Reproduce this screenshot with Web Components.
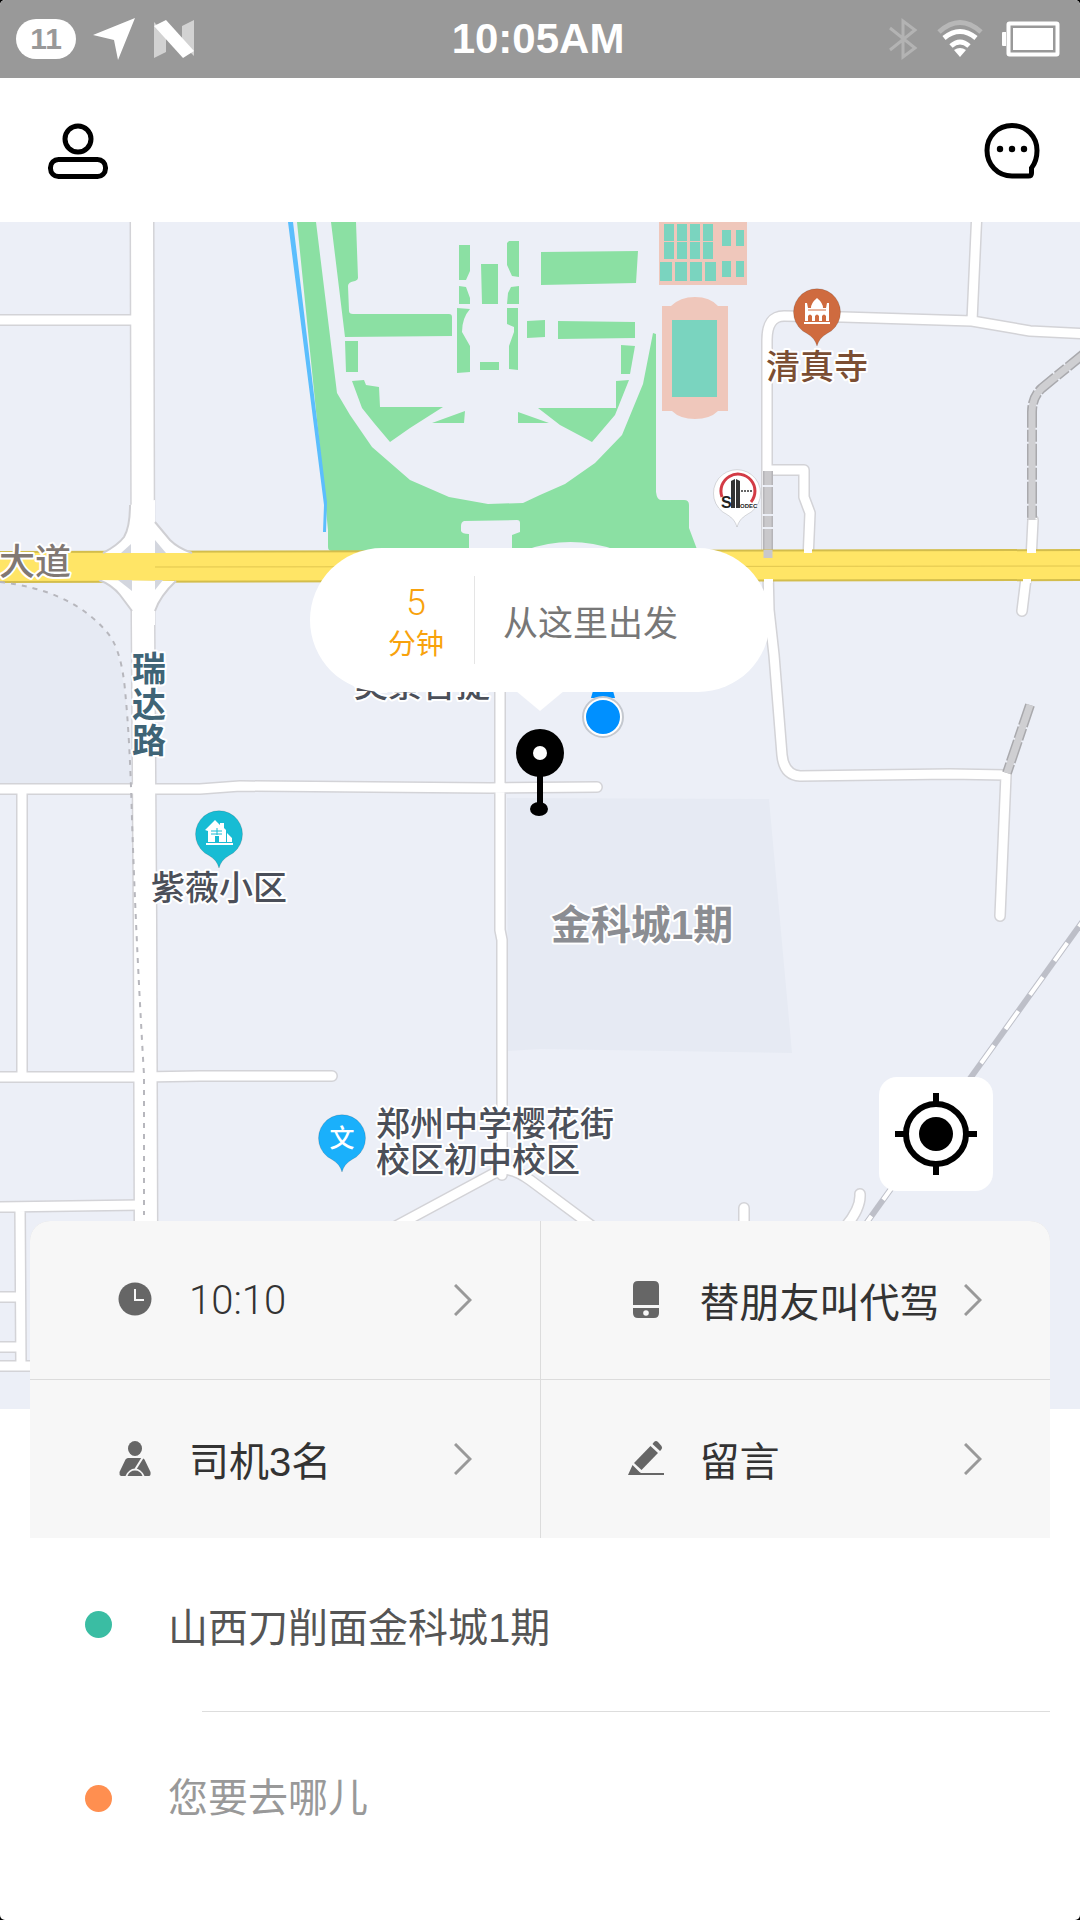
<!DOCTYPE html>
<html lang="zh-CN">
<head>
<meta charset="utf-8">
<meta name="viewport" content="width=device-width, initial-scale=1">
<title>代驾</title>
<style>
  html {
    background: #000;
  }
  body {
    margin: 0;
    color: #333;
    font-family: "Liberation Sans", "Noto Sans CJK SC", sans-serif;
    font-size: 40px;
  }
</style>
</head>
<body>
<driver-app></driver-app>

<script>
const icons = {
  user: `<svg width="60" height="56" viewBox="0 0 60 56" fill="none" stroke="#000" stroke-width="5">
    <circle cx="30" cy="16" r="13"/><rect x="2.5" y="36.500" width="55" height="17" rx="8"/></svg>`,
  chat: `<svg width="56" height="58" viewBox="0 0 56 58">
    <path d="M28 3.500C13.500 3.500 3 14.500 3 28.500S13.500 54 28 54H44.500Q47.500 54 47.500 51V46Q53 39 53 28.500C53 14.500 42.500 3.500 28 3.500Z" fill="none" stroke="#000" stroke-width="5"/>
    <circle cx="16" cy="27" r="3.200"/><circle cx="28" cy="27" r="3.200"/><circle cx="40" cy="27" r="3.200"/></svg>`,
  locate: `<svg width="82" height="82" viewBox="0 0 82 82" fill="none" stroke="#000" stroke-width="6">
    <circle cx="41" cy="41" r="30"/><path d="M41 0V10M41 72V82M0 41H10M72 41H82"/>
    <circle cx="41" cy="41" r="17" fill="#000" stroke="none"/></svg>`,
  clock: `<svg width="40" height="40" viewBox="0 0 40 40"><circle cx="20" cy="19" r="16.500" fill="#666"/>
    <path d="M20 9V20H29" fill="none" stroke="#f7f7f7" stroke-width="2"/></svg>`,
  phone: `<svg width="40" height="40" viewBox="0 0 40 40"><g fill="#666">
    <path d="M7 25V6Q7 1 12 1H28Q33 1 33 6V25Z"/><path d="M7 28H33V33Q33 38 28 38H12Q7 38 7 33Z"/></g>
    <circle cx="20" cy="33" r="2.800" fill="#f7f7f7"/></svg>`,
  driver: `<svg width="40" height="40" viewBox="0 0 40 40"><g fill="#666">
    <ellipse cx="20" cy="9.500" rx="7" ry="7.500"/>
    <path d="M13 19H27Q28.500 19 29.500 20.500L35.500 33Q36 37 34 37H29.500Q26 29.500 20 29.500T10.500 37H6Q4 36 4.500 33L10.500 20.500Q11.500 19 13 19Z"/>
    <path d="M12.500 37Q14.500 31.500 20 31.500T27.500 37Z"/></g>
    <path d="M28 18L20.500 30" stroke="#f7f7f7" stroke-width="2"/></svg>`,
  pencil: `<svg width="40" height="40" viewBox="0 0 40 40"><g fill="#666">
    <path d="M28 3Q30 1 32 3L35.500 7Q37 9 35 11L34 12L26.500 5Z"/>
    <path d="M24.500 7L32 14L15.500 31L8 24Z"/><path d="M6.500 26L13.500 33L15 34H38V36H2Z"/></g></svg>`,
  chevron: `<svg width="18" height="32" viewBox="0 0 18 32"><path d="M1 1L16 16L1 31" fill="none" stroke="#999" stroke-width="3"/></svg>`,
  arrow: `<svg width="46" height="44" viewBox="0 0 46 44"><path d="M43 1L26 43L22 23L1 18Z" fill="#fff"/></svg>`,
  nougat: `<svg width="40" height="38" viewBox="0 0 40 38"><path d="M0 2L12 14V32L0 38ZM28 6L40 0V36L28 24Z" fill="#d2d2d2"/>
    <path d="M0 6L12 0L40 31L29 38Z" fill="#fff"/></svg>`,
  bluetooth: `<svg width="30" height="42" viewBox="0 0 30 42"><path d="M2 10L27 30L15 39V3L27 12L2 32" fill="none" stroke="#b3b3b3" stroke-width="3"/></svg>`,
  wifi: `<svg width="48" height="40" viewBox="0 0 48 40" fill="none" stroke="#fff" stroke-width="5">
    <path d="M3 13Q24-6 45 13" stroke="#b7b7b7"/><path d="M8 19Q24 6 40 19M15 27Q24 19 33 27"/>
    <path d="M18 31Q24 27 30 31L24 38Z" fill="#fff" stroke="none"/></svg>`,
  battery: `<svg width="58" height="36" viewBox="0 0 58 36"><path d="M4 11H1Q0 11 0 12V24Q0 25 1 25H4Z" fill="#fff"/>
    <rect x="6.500" y="2.500" width="49" height="31" rx="1" fill="none" stroke="#fff" stroke-width="4"/>
    <rect x="11" y="7" width="40" height="22" fill="#fff"/></svg>`,
};

class AppIcon extends HTMLElement {
  constructor() {
    super();
    this.shadowDOM = this.attachShadow({ mode: "open" });
  }

  connectedCallback() {
    this.shadowDOM.innerHTML = `
    <style>
      :host { display: block; flex: none; }
      svg { display: block; }
    </style>
    ${icons[this.getAttribute("name")]}`;
  }
}

class StatusBar extends HTMLElement {
  constructor() {
    super();
    this.shadowDOM = this.attachShadow({ mode: "open" });
    this.shadowDOM.innerHTML = `
    <style>
      :host {
        display: grid;
        grid-template-columns: 1fr auto 1fr;
        align-items: center;
        height: 78px;
        padding: 0 20px 0 16px;
        background: #999;
        color: #fff;
      }
      div { display: flex; align-items: center; gap: 18px; }
      .left { gap: 16px; }
      .right { justify-content: flex-end; }
      .count {
        width: 60px;
        border-radius: 20px;
        background: #fff;
        color: #999;
        font-size: 30px;
        font-weight: bold;
        line-height: 40px;
        text-align: center;
      }
      time { font-size: 42px; font-weight: bold; }
    </style>
    <div class="left">
      <span class="count">11</span>
      <app-icon name="arrow"></app-icon>
      <app-icon name="nougat"></app-icon>
    </div>
    <time><slot></slot></time>
    <div class="right">
      <app-icon name="bluetooth"></app-icon>
      <app-icon name="wifi"></app-icon>
      <app-icon name="battery"></app-icon>
    </div>`;
  }
}

class TopBar extends HTMLElement {
  constructor() {
    super();
    this.shadowDOM = this.attachShadow({ mode: "open" });
    this.shadowDOM.innerHTML = `
    <style>
      :host {
        display: flex;
        align-items: center;
        justify-content: space-between;
        height: 142px;
        padding: 2px 40px 0 48px;
      }
      button { padding: 0; border: 0; background: none; }
    </style>
    <button aria-label="个人中心"><app-icon name="user"></app-icon></button>
    <button aria-label="消息"><app-icon name="chat"></app-icon></button>`;
  }
}

class CityMap extends HTMLElement {
  constructor() {
    super();
    this.shadowDOM = this.attachShadow({ mode: "open" });
    this.render();
  }

  // every street is drawn twice: a grey casing first, then the white surface
  roads() {
    const streets = [
      "M-9 320H142", "M-9 789H131L200 789L240 786L490 788L597 787",
      "M22 789V1077", "M-9 1077H142L200 1076L332 1076", "M-9 1207L142 1205",
      "M20 1207L21 1366", "M-9 1297H20", "M-9 1347H20", "M-9 1366H40",
      "M500 680V930L502 940V1175", "M502 1169L385 1232", "M502 1169Q515 1169 530 1180L600 1232",
      "M744 1208V1240", "M860 1194Q861 1208 846 1226",
      "M977 210L972 321", "M767 560V340Q767 316 784 316L843 317L972 321L1030 331L1090 334",
      "M767 470H804V497L810 513L808 560",
      "M768 570L769 610L774 655L782 755Q784 775 800 776L950 774L1006 775L1000 916",
      "M1033 520L1031 560", "M1027 570L1022 611",
    ];
    const d = streets.join("");
    const avenue = "M142 210L143 620L145 920L146 1240";
    return `
      <g fill="none" stroke-linecap="round" stroke-linejoin="round">
        <path d="${avenue}" stroke="#d3d3d7" stroke-width="25"/>
        <path d="${d}" stroke="#d3d3d7" stroke-width="12"/>
        <path d="${d}" stroke="#fff" stroke-width="9"/>
        <path d="${avenue}" stroke="#fff" stroke-width="22"/>
      </g>`;
  }

  junction() {
    const ramps = [
      "M130 505Q130 527 124 537Q118 545 103 553", "M155 522L170 540Q178 548 192 553",
      "M99 580Q112 585 120 595L132 611", "M176 581Q160 596 155 611",
    ];
    return `
      <path d="M130 505Q130 527 124 537Q118 545 103 553H192Q178 548 170 540L155 522V500Z" fill="#fff"/>
      <path d="M99 580Q112 585 120 595L132 611V625H155V611Q160 596 176 581Z" fill="#fff"/>
      <path d="${ramps.join("")}" fill="none" stroke="#cfcfd3" stroke-width="2"/>
      <path d="M121 553L131 544V553ZM155 540V553H166ZM118 580H132V591ZM155 580H163L155 590Z" fill="#d3d6de"/>`;
  }

  pin(x, y, color, glyph) {
    return `
      <g transform="translate(${x} ${y})">
        <path d="M0 34Q-2 26-10 21.500A23.500 23.500 0 1 1 10 21.500Q2 26 0 34Z" fill="${color}" stroke="#0002"/>
        ${glyph}
      </g>`;
  }

  render() {
    this.shadowDOM.innerHTML = `
    <style>
      :host {
        display: grid;
        position: relative;
        height: 1187px;
        overflow: hidden;
        background: #eceff7;
      }
      svg { display: block; width: 100%; height: 1187px; }
      text {
        font-size: 34px;
        font-weight: 500;
        fill: #4b4f59;
        stroke: #fff;
        stroke-width: 4px;
        stroke-linejoin: round;
        paint-order: stroke;
      }
      .big { font-size: 40px; font-weight: bold; fill: #8b8d92; }
      .road { font-size: 36px; fill: #817873; }
      .avenue { font-size: 34px; font-weight: bold; fill: #3f6476; }
      .temple { fill: #7b4e33; }
      .glyph { font-size: 25px; fill: #fff; stroke: none; }
      .logo { font-size: 16px; font-weight: bold; fill: #222; stroke: none; }
      .small { font-size: 6px; }
      ::slotted(pickup-bubble) {
        position: absolute;
        top: 326px;
        left: 50%;
        transform: translateX(-50%);
      }
      ::slotted(locate-button) {
        position: absolute;
        right: 87px;
        bottom: 218px;
      }
    </style>
    <svg viewBox="0 222 1080 1187" preserveAspectRatio="xMidYMid slice" role="img" aria-label="地图">
      <g fill="#e6eaf3">
        <path d="M0 582Q70 590 105 630Q128 655 131 784H0Z"/>
        <path d="M507 798L769 799L792 1053L540 1049L508 1051Z"/>
      </g>
      <g fill="#8be0a3">
        <path d="M297 222H316L337 393L350 415L372 447L410 480L449 497L488 504L523 503L540 495L565 484L595 463L622 435L643 384L653 333L656 334V492Q657 500 661 500H684Q689 500 689 505V528L698 552H512V535L520 532V523Q520 520 517 520L464 521Q461 522 461 526V531Q462 534 469 534V551H332Q328 551 328 547V530Z"/>
        <path d="M331 222H356L358 278Q358 280 355 281Q348 282 348 286L349 311Q349 314 353 314H449Q452 314 452 317V336L345 337Z"/>
        <path d="M345 341H358V372H346Z"/>
        <path d="M352 381L364 380L366 385L379 387L380 407H443L410 428L390 442L374 423L362 408Z"/>
        <path d="M432 423L465 411L464 423ZM518 412L549 423H518Z"/>
        <path d="M538 408H616V381L629 380L615 415L592 442L560 425Z"/>
        <path d="M621 345L635 346L630 374H621Z"/>
        <path d="M541 252L638 251L636 283L541 285ZM558 321L635 322V338L558 339ZM527 321L545 320V337L527 338Z"/>
        <path d="M459 245H470V271L466 280H459ZM507 243L509 241H519V277L512 276L507 265ZM481 264H498V304H482Z"/>
        <path d="M459 286L466 287L470 298V304H459ZM511 287L519 286V304H507L508 293Z"/>
        <path d="M457 308L470 309Q462 318 462 332L470 346V372L457 373ZM507 308H518V370L509 369V346L514 332V327L507 324ZM480 362H499V370H480Z"/>
      </g>
      <path d="M526 550Q570 534 616 550Z" fill="#eceff7"/>
      <path d="M288 222H293L327 502L326 532H323L324 505Z" fill="#5bbefd"/>
      <path d="M659 222H747V285H659ZM662 306H671Q680 297 695 297T718 306H728V411H718Q710 419 695 419T672 411H662Z" fill="#efc7bb"/>
      <path d="M664 224h10v17h-10zm13 0h10v17h-10zm13 0h10v17h-10zm13 0h10v17h-10zM664 242h10v17h-10zm13 0h10v17h-10zm13 0h10v17h-10zm13 0h10v17h-10zM660 262h12v19h-12zm15 0h12v19h-12zm15 0h12v19h-12zm15 0h11v19h-11zM722 230h9v16h-9zm14 0h8v16h-8zM722 261h9v16h-9zm14 0h8v16h-8zM672 320h45v77h-45z" fill="#7ad4bf"/>

      ${this.roads()}

      <g fill="none">
        <path d="M1085 353L1042 388Q1032 397 1032 412V520M1030 705L1007 773" stroke="#a9a9ad" stroke-width="10" stroke-dasharray="22 2 12 2"/>
        <path d="M1085 353L1042 388Q1032 397 1032 412V520M1030 705L1007 773" stroke="#cfcfd2" stroke-width="7"/>
        <path d="M768 471V558" stroke="#b5b4b8" stroke-width="10"/>
        <path d="M768 471V558" stroke="#c9c8cb" stroke-width="7"/>
        <path d="M762 486H774M762 515H774M762 528H774" stroke="#eceff7" stroke-width="2"/>
        <path d="M1083 921L860 1232" stroke="#bdbfc8" stroke-width="6"/>
        <path d="M1083 921L860 1232" stroke="#fff" stroke-width="4" stroke-dasharray="22 20" stroke-dashoffset="15"/>
      </g>

      <path d="M-5 552L540 551L1085 550V580L540 581L-5 582Z" fill="#ffe566" stroke="#d3bd4c" stroke-width="2"/>
      ${this.junction()}
      <path d="M99 554H195V580H99Z" fill="#ffe566"/>
      <path d="M155 567L1085 566" stroke="#e0c64f"/>
      <path d="M804 549H812V553H804ZM1027 549H1036V553H1027ZM764 579H773V583H764ZM1023 579H1031V583H1023Z" fill="#fff"/>
      <path d="M768 550V558" stroke="#c9c8cb" stroke-width="9"/>
      <path d="M0 582Q70 590 105 630Q121 646 125 690Q130 740 132 820Q136 940 144 1075V1215" fill="none" stroke="#b7b7bd" stroke-width="2" stroke-dasharray="5 6"/>

      <text class="road" x="71" y="575" text-anchor="end">大道</text>
      <text class="avenue" text-anchor="middle"><tspan x="149" y="681">瑞</tspan><tspan x="149" y="717">达</tspan><tspan x="149" y="753">路</tspan></text>
      <text class="temple" x="817" y="379" text-anchor="middle">清真寺</text>
      <text x="219" y="900" text-anchor="middle">紫薇小区</text>
      <text x="422" y="697" text-anchor="middle">美景菩提</text>
      <text x="376" y="1136">郑州中学樱花街</text>
      <text x="376" y="1172">校区初中校区</text>
      <text class="big" x="551" y="939">金科城1期</text>

      ${this.pin(817, 312, "#cf6b3f", `<path d="M-13 10H13V12H-13ZM-12-9H-10L-9-4H-6Q-6-9 0-14Q6-9 6-4H9L10-9H12V9H9V4Q7 1 5 4V9H2V4Q0 1-2 4V9H-5V4Q-7 1-9 4V9H-12Z" fill="#fff"/><path d="M-9-2H9" stroke="#cf6b3f"/>`)}
      ${this.pin(219, 834, "#17bcd4", `<path d="M-14-4L-4-14L1-9V-11H5V-6L7-4V8H0V2H-4V8H-11V-3ZM8-1L13 4V8H8ZM-13 9H14V11H-13Z" fill="#fff"/><path d="M-8-3H3M-2-6V1M-8 0H3" stroke="#17bcd4"/>`)}
      ${this.pin(342, 1138, "#1ab0fb", `<text class="glyph" y="9" text-anchor="middle">文</text>`)}
      ${this.pin(737, 493, "#fff", `<path d="M-15 4A17 17 0 1 1 14 9" fill="none" stroke="#d33b45" stroke-width="3"/>
        <path d="M-6 15V-12L-2-14V15ZM-1 15V-14L3-12V15Z" fill="#333"/>
        <path d="M4-2H15" stroke="#666" stroke-width="2" stroke-dasharray="2 1"/>
        <text class="logo" x="-16" y="15">S</text>
        <text class="logo small" x="3" y="15">ODEC</text>`)}

      <path d="M596 680H610L615 698H591Z" fill="#0090ff"/>
      <circle cx="603" cy="717" r="20" fill="#fff" stroke="#c4c8cf" stroke-width="2"/>
      <circle cx="603" cy="717" r="17" fill="#0090ff"/>
      <path d="M540 770V806" stroke="#000" stroke-width="6"/>
      <circle cx="540" cy="753" r="24"/>
      <ellipse cx="539" cy="809" rx="9" ry="7"/>
      <circle cx="540" cy="753" r="7" fill="#fff"/>
    </svg>
    <slot></slot>`;
  }
}

class PickupBubble extends HTMLElement {
  constructor() {
    super();
    this.shadowDOM = this.attachShadow({ mode: "open" });
    this.shadowDOM.innerHTML = `
    <style>
      :host { display: block; }
      button {
        display: flex;
        align-items: center;
        box-sizing: border-box;
        width: 460px;
        height: 144px;
        padding: 0 0 0 78px;
        border: 0;
        border-radius: 72px;
        background: #fff;
        font: inherit;
      }
      .wait {
        display: flex;
        flex-direction: column;
        justify-content: center;
        box-sizing: border-box;
        width: 87px;
        height: 88px;
        padding-top: 8px;
        border-right: 1px solid #e5e5e5;
        color: #f8a20c;
        font-size: 28px;
        line-height: 42px;
        text-align: left;
      }
      .wait b { width: 56px; font-family: Roboto, sans-serif; font-size: 36px; font-weight: 300; text-align: center; }
      .label { margin-left: 28px; color: #777; font-size: 35px; }
      button::after {
        content: "";
        position: absolute;
        top: 143px;
        left: 50%;
        border: 24px solid transparent;
        border-top: 20px solid #fff;
        border-bottom: 0;
        transform: translateX(-50%);
      }
    </style>
    <button>
      <span class="wait"><b><slot name="minutes"></slot></b>分钟</span>
      <span class="label"><slot></slot></span>
    </button>`;
  }
}

class LocateButton extends HTMLElement {
  constructor() {
    super();
    this.shadowDOM = this.attachShadow({ mode: "open" });
    this.shadowDOM.innerHTML = `
    <style>
      :host { display: block; }
      button { padding: 16px; border: 0; border-radius: 18px; background: #fff; }
    </style>
    <button aria-label="定位"><app-icon name="locate"></app-icon></button>`;
  }
}

class OrderOption extends HTMLElement {
  constructor() {
    super();
    this.shadowDOM = this.attachShadow({ mode: "open" });
  }

  connectedCallback() {
    this.shadowDOM.innerHTML = `
    <style>
      :host { display: block; background: #f7f7f7; }
      button {
        display: flex;
        align-items: center;
        width: 100%;
        height: 158px;
        padding: 0 68px 0 85px;
        border: 0;
        background: none;
        color: #333;
        font: inherit;
        text-align: left;
        white-space: nowrap;
      }
      span { flex: 1; min-width: 0; margin-left: 34px; }
      :host([icon="clock"]) span { font-family: Roboto, sans-serif; font-weight: 300; }
    </style>
    <button>
      <app-icon name="${this.getAttribute("icon")}"></app-icon>
      <span><slot></slot></span>
      <app-icon name="chevron"></app-icon>
    </button>`;
  }
}

class OrderOptions extends HTMLElement {
  constructor() {
    super();
    this.shadowDOM = this.attachShadow({ mode: "open" });
    this.shadowDOM.innerHTML = `
    <style>
      :host {
        display: grid;
        grid-template-columns: 1fr 1fr;
        gap: 1px;
        position: relative;
        margin: -188px 30px 0;
        border-radius: 20px 20px 0 0;
        background: #dcdcdc;
        overflow: hidden;
      }
    </style>
    <slot></slot>`;
  }
}

class RouteField extends HTMLElement {
  constructor() {
    super();
    this.shadowDOM = this.attachShadow({ mode: "open" });
  }

  connectedCallback() {
    this.shadowDOM.innerHTML = `
    <style>
      :host { display: block; }
      label { display: flex; align-items: center; height: 173px; padding: 0 30px 0 85px; }
      i { width: 27px; height: 27px; border-radius: 50%; background: var(--dot); }
      input {
        flex: 1;
        min-width: 0;
        margin-left: 56px;
        padding: 0;
        border: 0;
        outline: 0;
        background: none;
        color: #555;
        font: inherit;
      }
      input::placeholder { color: #999; opacity: 1; }
    </style>
    <label>
      <i></i>
      <input type="text" aria-label="${this.getAttribute("label")}"
        value="${this.getAttribute("value") || ""}" placeholder="${this.getAttribute("placeholder") || ""}">
    </label>`;
  }
}

class DriverApp extends HTMLElement {
  constructor() {
    super();
    this.shadowDOM = this.attachShadow({ mode: "open" });
    this.shadowDOM.innerHTML = `
    <style>
      :host {
        display: block;
        min-height: 100vh;
        border-radius: 5px;
        background: #fff;
        overflow: hidden;
      }
      hr { margin: 0 30px 0 202px; border: 0; border-top: 1px solid #ddd; }
      .from { --dot: #3abda3; }
      .to { --dot: #ff8f50; }
    </style>
    <status-bar>10:05AM</status-bar>
    <top-bar></top-bar>
    <city-map>
      <pickup-bubble><span slot="minutes">5</span>从这里出发</pickup-bubble>
      <locate-button></locate-button>
    </city-map>
    <order-options>
      <order-option icon="clock">10:10</order-option>
      <order-option icon="phone">替朋友叫代驾</order-option>
      <order-option icon="driver">司机3名</order-option>
      <order-option icon="pencil">留言</order-option>
    </order-options>
    <route-field class="from" label="出发地" value="山西刀削面金科城1期"></route-field>
    <hr>
    <route-field class="to" label="目的地" placeholder="您要去哪儿"></route-field>`;
  }
}

customElements.define("app-icon", AppIcon);
customElements.define("status-bar", StatusBar);
customElements.define("top-bar", TopBar);
customElements.define("pickup-bubble", PickupBubble);
customElements.define("locate-button", LocateButton);
customElements.define("city-map", CityMap);
customElements.define("order-option", OrderOption);
customElements.define("order-options", OrderOptions);
customElements.define("route-field", RouteField);
customElements.define("driver-app", DriverApp);
</script>
</body>
</html>
